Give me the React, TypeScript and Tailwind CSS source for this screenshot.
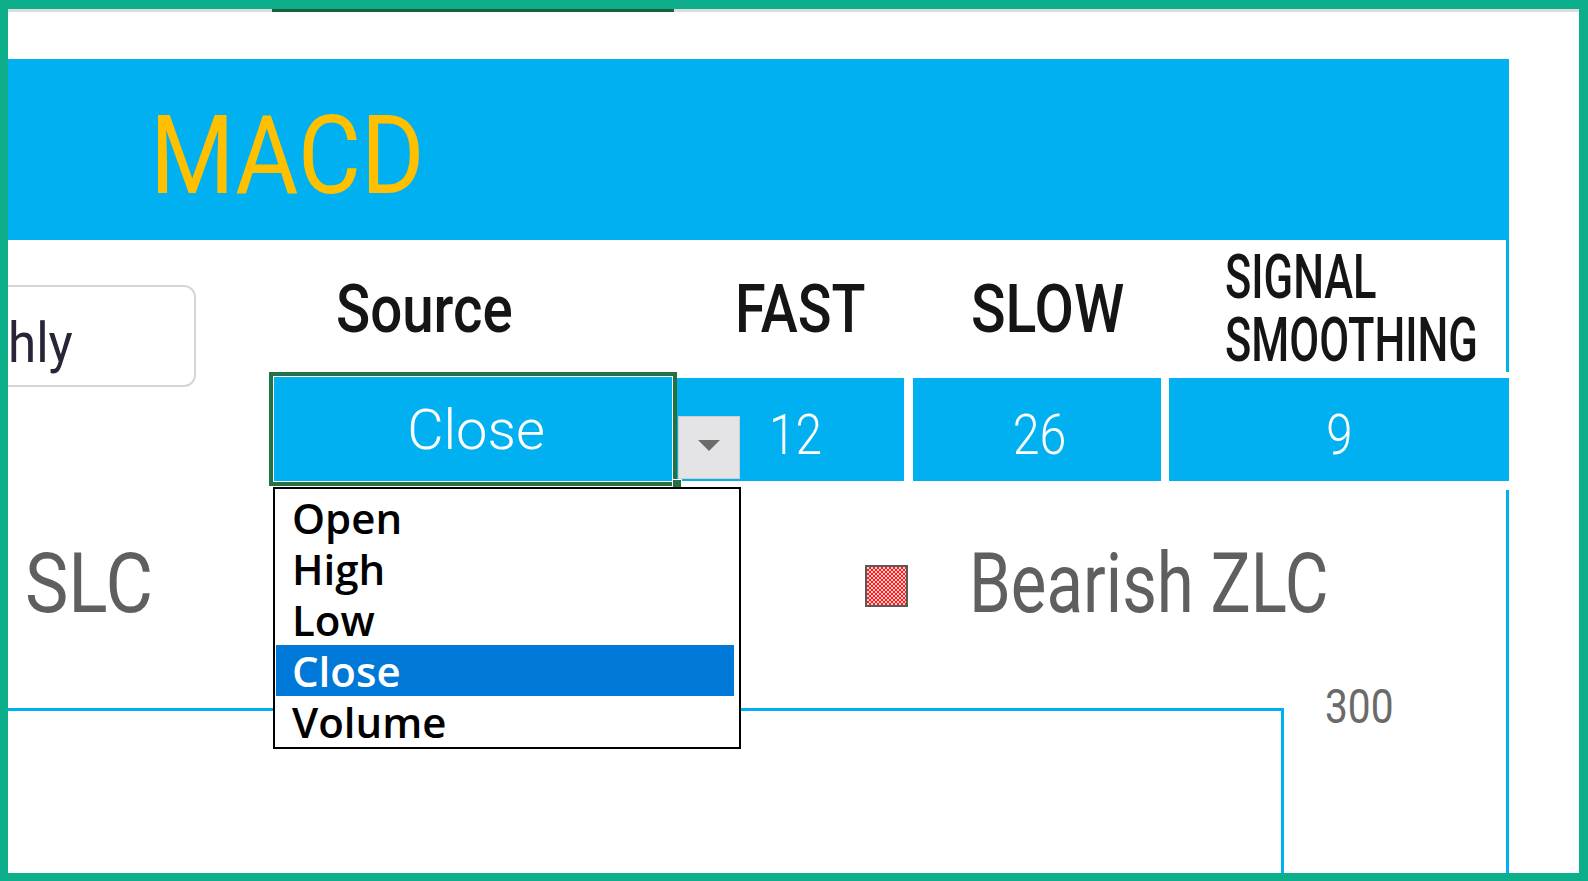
const ROBOTO = "font-['Roboto',sans-serif]";
const BLUE = 'bg-[#00b0f0]';

const SOURCES = ['Open', 'High', 'Low', 'Close', 'Volume'];

function Swatch() {
  return (
    <svg width="43" height="42" viewBox="0 0 43 42" aria-hidden>
      <defs>
        <pattern id="chk" width="4" height="4" patternUnits="userSpaceOnUse">
          <rect width="4" height="4" fill="#ff1f1f" />
          <rect width="2" height="2" fill="#ffc4c4" />
          <rect x="2" y="2" width="2" height="2" fill="#ffc4c4" />
        </pattern>
      </defs>
      <rect x="1" y="1" width="41" height="40" fill="url(#chk)" stroke="#595959" strokeWidth="2" />
    </svg>
  );
}

function SourceCell() {
  return (
    <div className="relative h-[114px] w-[408px] shrink-0 border-4 border-[#217346]">
      <div className={`flex h-full justify-center border border-white ${BLUE} pl-[6px] pt-[25px]`}>
        <span className={`inline-block ${ROBOTO} text-[56px] leading-none text-white`}>Close</span>
      </div>

      {/* fill handle */}
      <div className="absolute left-[399px] top-[103px] h-[10px] w-[10px] border border-white bg-[#217346]" />

      {/* validation arrow */}
      <div className="absolute left-[405px] top-[40px] z-10 flex h-[63px] w-[62px] items-center justify-center border border-[#cfcfcf] bg-[#e4e4e6] pb-[4px]">
        <svg width="22" height="11" viewBox="0 0 22 11" aria-hidden>
          <path d="M0 0H22L11 11Z" fill="#6b6b6b" />
        </svg>
      </div>

      {/* open list */}
      <div className="absolute left-0 top-[111px] z-20 h-[262px] w-[468px] border-2 border-black bg-white pt-[3px] font-['Open_Sans',sans-serif] text-[42px] font-semibold leading-[51px] text-black">
        {SOURCES.map((s) => (
          <div
            key={s}
            className={`ml-[1px] mr-[5px] h-[51px] pl-[16px] ${s === 'Close' ? 'bg-[#0078d7] text-white' : ''}`}
          >
            {s}
          </div>
        ))}
      </div>
    </div>
  );
}

export default function App() {
  return (
    <div className="h-[881px] w-[1588px] overflow-hidden border-b-8 border-l-8 border-r-[9px] border-t-[9px] border-[#0caf8a] bg-white">
      <div className="relative flex h-full flex-col">
        {/* column header edge */}
        <div className="h-[50px] shrink-0">
          <div className="flex h-[3px] bg-[#dcdcdc]">
            <div className="ml-[264px] w-[402px] bg-[#19603c]" />
          </div>
        </div>

        {/* title banner */}
        <div className={`h-[181px] w-[1501px] shrink-0 ${BLUE} pl-[142px] pt-[42px]`}>
          <span className={`inline-block origin-left scale-x-[0.88] ${ROBOTO} text-[110px] leading-none text-[#ffc000]`}>
            MACD
          </span>
        </div>

        {/* parameter labels */}
        <div className={`flex h-[132px] w-[1501px] shrink-0 ${ROBOTO} font-medium text-[#151515]`}>
          <div className="w-[261px] shrink-0">
            <div className="mt-[45px] h-[102px] w-[188px] overflow-hidden rounded-r-[12px] border-2 border-l-0 border-[#d6d6d6] bg-white pt-[29px]">
              <span className="inline-block origin-left scale-x-[0.93] text-[55px] font-normal leading-none text-[#2a2438]">
                hly
              </span>
            </div>
          </div>
          <div className="w-[408px] shrink-0 pl-[67px] pt-[37px]">
            <span className="inline-block origin-left scale-x-[0.855] text-[66px] leading-none">Source</span>
          </div>
          <div className="w-[227px] shrink-0 pl-[58px] pt-[37px]">
            <span className="inline-block origin-left scale-x-[0.845] text-[66px] leading-none">FAST</span>
          </div>
          <div className="w-[9px] shrink-0" />
          <div className="w-[248px] shrink-0 pl-[58px] pt-[37px]">
            <span className="inline-block origin-left scale-x-[0.865] text-[66px] leading-none">SLOW</span>
          </div>
          <div className="w-[8px] shrink-0" />
          <div className="w-[340px] shrink-0 border-r-[3px] border-[#00b0f0] pl-[56px] pt-[5px]">
            <div className="origin-left scale-x-[0.7] whitespace-nowrap text-[62px] leading-[63px]">
              SIGNAL
              <br />
              SMOOTHING
            </div>
          </div>
        </div>

        {/* parameter values */}
        <div className={`flex h-[114px] w-[1501px] shrink-0 items-start ${ROBOTO} font-light text-white`}>
          <div className="w-[261px] shrink-0" />
          <SourceCell />
          <div className={`mt-[6px] flex h-[103px] w-[227px] shrink-0 justify-center ${BLUE} pl-[11px] pt-[30px]`}>
            <span className="inline-block scale-x-[0.87] text-[55px] leading-none">12</span>
          </div>
          <div className="w-[9px] shrink-0" />
          <div className={`mt-[6px] flex h-[103px] w-[248px] shrink-0 justify-center ${BLUE} pl-[6px] pt-[30px]`}>
            <span className="inline-block scale-x-[0.88] text-[55px] leading-none">26</span>
          </div>
          <div className="w-[8px] shrink-0" />
          <div className={`mt-[6px] flex h-[103px] w-[340px] shrink-0 justify-center ${BLUE} pt-[30px]`}>
            <span className="inline-block scale-x-[0.86] text-[55px] leading-none">9</span>
          </div>
        </div>

        {/* chart */}
        <div className={`mt-[4px] flex w-[1501px] flex-1 flex-col border-r-[3px] border-[#00b0f0] ${ROBOTO} text-[#5f5f5f]`}>
          <div className="flex h-[135px] shrink-0 items-start pt-[52px]">
            <div className="w-[857px] shrink-0 pl-[17px]">
              <span className="inline-block origin-left scale-x-[0.88] text-[83px] leading-none">SLC</span>
            </div>
            <div className="mt-[23px] shrink-0">
              <Swatch />
            </div>
            <div className="ml-[61px]">
              <span className="inline-block origin-left scale-x-[0.8] whitespace-nowrap text-[84px] leading-none">
                Bearish ZLC
              </span>
            </div>
          </div>
          <div className="flex flex-1 items-start">
            <div className="mt-[83px] w-[1276px] shrink-0 self-stretch border-r-[3px] border-t-[3px] border-[#00b0f0]" />
            <div className="ml-[41px] mt-[57px]">
              <span className="inline-block origin-left scale-x-[0.83] text-[49px] leading-none text-[#6a6a6a]">300</span>
            </div>
          </div>
        </div>
      </div>
    </div>
  );
}
